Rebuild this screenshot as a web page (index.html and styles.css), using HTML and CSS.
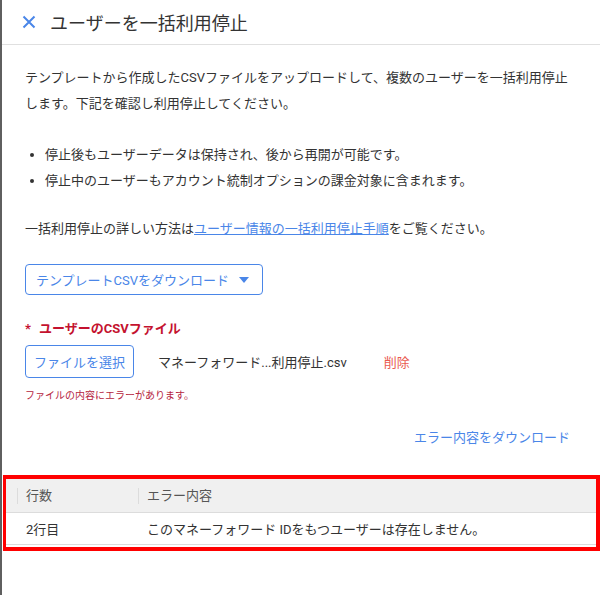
FILE: index.html
```html
<!DOCTYPE html>
<html>
    <head>
        <title>ユーザーを一括利用停止</title>
        <link rel="stylesheet" href="styles.css">
    </head>
    <body>
        <div class="page">
            <div class="header">
                <svg class="close-icon" width="14" height="14" viewBox="0 0 14 14">
                    <path d="M1.5 1.5 L12.5 12.5 M12.5 1.5 L1.5 12.5" stroke="#4a86e8" stroke-width="2" fill="none"/>
                </svg>
                <span class="title">ユーザーを一括利用停止</span>
            </div>

            <div class="content">
                <p class="intro">テンプレートから作成したCSVファイルをアップロードして、複数のユーザーを一括利用停止します。下記を確認し利用停止してください。</p>

                <ul class="notes">
                    <li>停止後もユーザーデータは保持され、後から再開が可能です。</li>
                    <li>停止中のユーザーもアカウント統制オプションの課金対象に含まれます。</li>
                </ul>

                <p class="help">一括利用停止の詳しい方法は<a href="#" class="help-link">ユーザー情報の一括利用停止手順</a>をご覧ください。</p>

                <button class="template-button">テンプレートCSVをダウンロード<span class="caret"></span></button>

                <div class="field-label"><span class="required">*</span>ユーザーのCSVファイル</div>

                <div class="file-row">
                    <button class="file-button">ファイルを選択</button>
                    <span class="file-name">マネーフォワード...利用停止.csv</span>
                    <a href="#" class="delete-link">削除</a>
                </div>
                <p class="file-error">ファイルの内容にエラーがあります。</p>

                <div class="error-download">
                    <a href="#" class="error-download-link">エラー内容をダウンロード</a>
                </div>
            </div>

            <div class="error-box">
                <div class="error-table">
                    <div class="th"><span>行数</span></div>
                    <div class="th"><span>エラー内容</span></div>
                    <div class="td">2行目</div>
                    <div class="td">このマネーフォワード IDをもつユーザーは存在しません。</div>
                </div>
            </div>
        </div>
    </body>
</html>
```

FILE: styles.css
```css
body{
    margin: 0;
    font-family: Roboto, "Noto Sans CJK JP", sans-serif;
    color: #333;
    background-color: white;
}
.page{
    border-left: 2px solid #5f5f5f;
    min-height: 595px;
    box-sizing: border-box;
}
.header{
    height: 44px;
    display: flex;
    align-items: center;
    padding-left: 20px;
    border-bottom: 1px solid #e0e0e0;
}
.close-icon{
    margin-right: 14px;
}
.title{
    font-size: 18px;
    color: #333;
}
.content{
    padding: 20px 30px 0 23px;
    font-size: 13px;
}
.intro{
    margin: 0;
    line-height: 26px;
}
.notes{
    margin: 25px 0 0 0;
    padding-left: 20px;
    line-height: 26px;
}
.help{
    margin: 22px 0 0 0;
    line-height: 26px;
}
.help-link{
    color: #4a86e8;
}
.template-button{
    margin-top: 22px;
    height: 31px;
    padding: 0 13px 0 10px;
    background-color: white;
    border: 1px solid #4a86e8;
    border-radius: 4px;
    color: #4a86e8;
    font-family: inherit;
    font-size: 13px;
    display: flex;
    align-items: center;
}
.caret{
    margin-left: 10px;
    width: 0;
    height: 0;
    border-left: 5px solid transparent;
    border-right: 5px solid transparent;
    border-top: 6px solid #4a86e8;
}
.field-label{
    margin-top: 23px;
    color: #c4122f;
    font-weight: bold;
    font-size: 13px;
}
.required{
    margin-right: 8px;
}
.file-row{
    margin-top: 8px;
    display: flex;
    align-items: center;
}
.file-button{
    height: 33px;
    padding: 0 8px;
    background-color: white;
    border: 1px solid #4a86e8;
    border-radius: 4px;
    color: #4a86e8;
    font-family: inherit;
    font-size: 13px;
}
.file-name{
    margin-left: 24px;
}
.delete-link{
    margin-left: 37px;
    color: #ea5a50;
    text-decoration: none;
}
.file-error{
    margin: 9px 0 0 0;
    font-size: 10px;
    color: #b5243e;
}
.error-download{
    margin-top: 25px;
    text-align: right;
}
.error-download-link{
    color: #4a86e8;
    text-decoration: none;
}
.error-box{
    margin: 29px 0 0 1px;
    border: 4px solid #ff0000;
    border-left-width: 3px;
    padding-bottom: 2px;
}
.error-table{
    display: grid;
    grid-template-columns: 121px 1fr;
    font-size: 13px;
}
.th{
    background-color: #f0f0f0;
    height: 33px;
    display: flex;
    align-items: center;
    padding-left: 11px;
    color: #555;
    border-bottom: 1px solid #dcdcdc;
}
.th span{
    border-left: 1px solid #dcdcdc;
    padding-left: 8px;
    line-height: 16px;
}
.td{
    height: 31px;
    display: flex;
    align-items: center;
    padding-left: 20px;
    border-bottom: 1px solid #dcdcdc;
}
```
